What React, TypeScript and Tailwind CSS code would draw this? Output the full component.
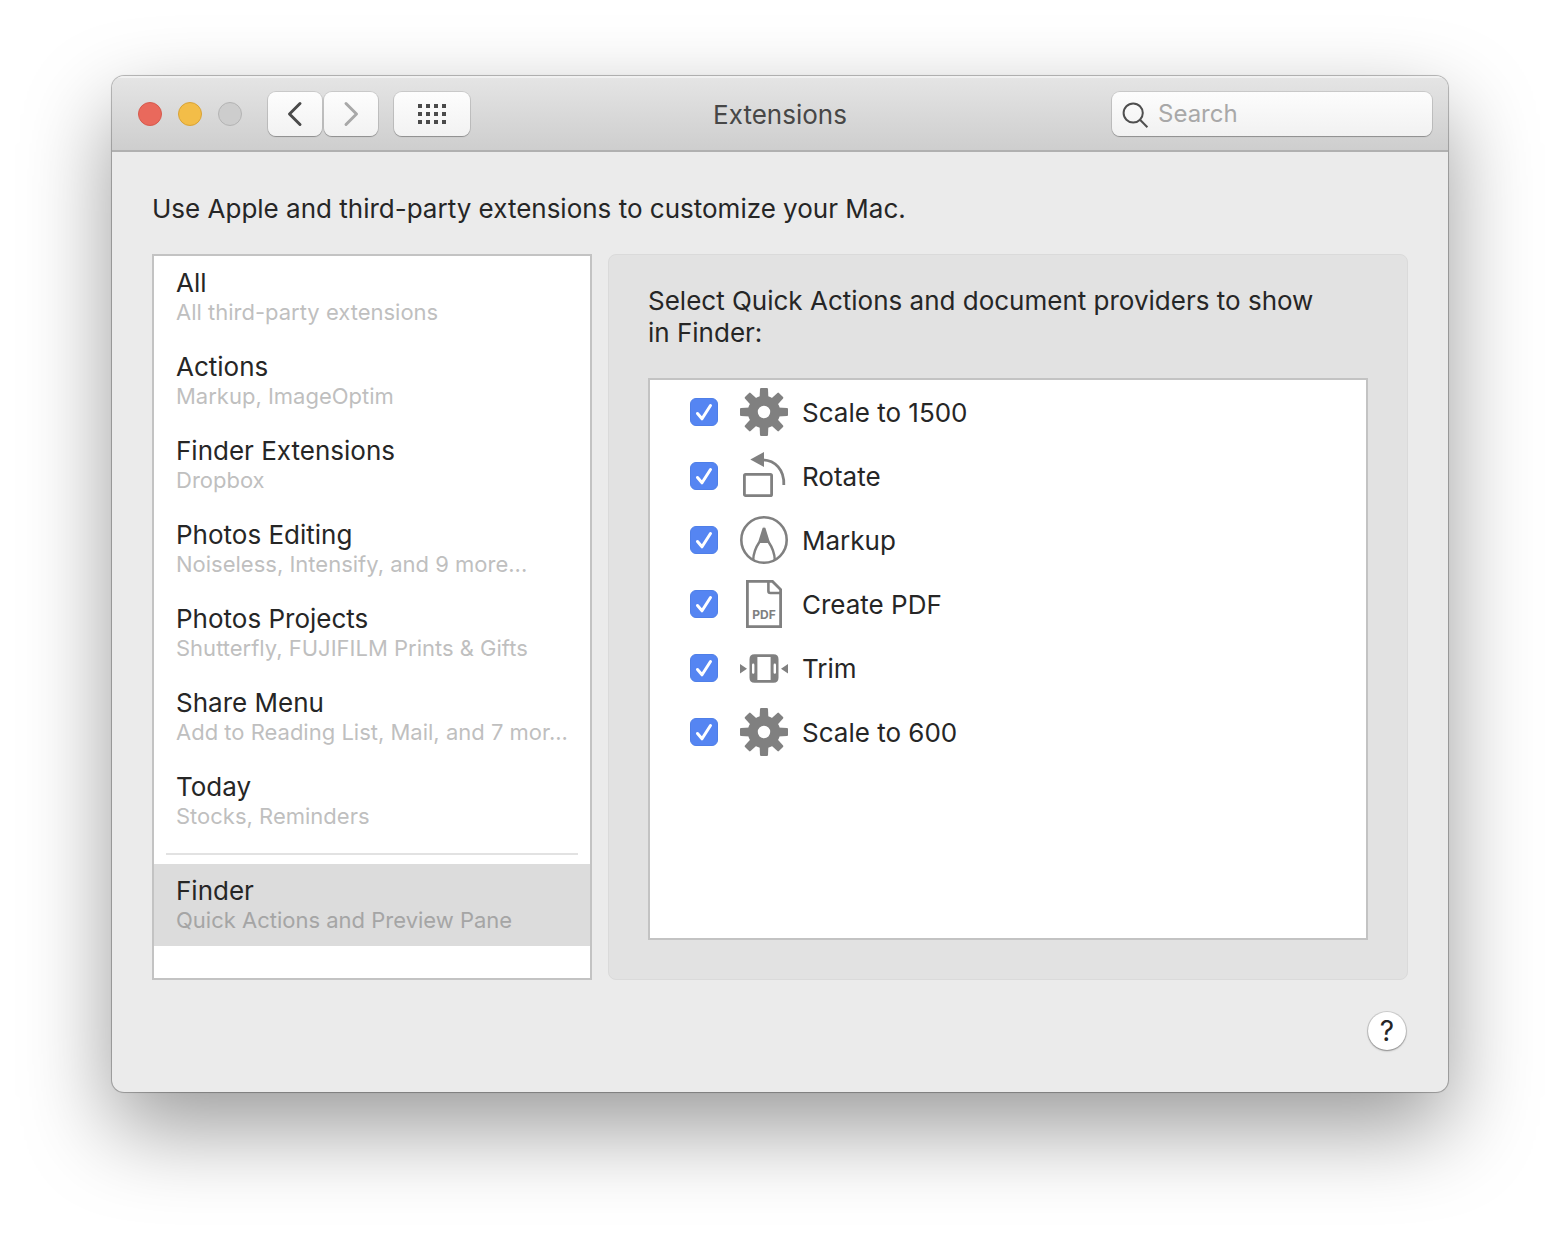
import { useState } from "react";
import type { ReactNode } from "react";
import clsx from "clsx";

const CATEGORIES = [
  { title: "All", detail: "All third-party extensions" },
  { title: "Actions", detail: "Markup, ImageOptim" },
  { title: "Finder Extensions", detail: "Dropbox" },
  { title: "Photos Editing", detail: "Noiseless, Intensify, and 9 more..." },
  { title: "Photos Projects", detail: "Shutterfly, FUJIFILM Prints & Gifts" },
  { title: "Share Menu", detail: "Add to Reading List, Mail, and 7 mor..." },
  { title: "Today", detail: "Stocks, Reminders" },
];

const FINDER = { title: "Finder", detail: "Quick Actions and Preview Pane" };

const TEETH = [0, 45, 90, 135, 180, 225, 270, 315];

function IconFrame({ children }: { children: ReactNode }) {
  return (
    <svg viewBox="0 0 48 48" className="size-12 shrink-0 text-[#808080]" fill="none" stroke="none" aria-hidden>
      {children}
    </svg>
  );
}

function GearIcon() {
  return (
    <IconFrame>
      <circle cx="24" cy="24" r="11.2" stroke="currentColor" strokeWidth="10" />
      {TEETH.map((angle) => (
        <path
          key={angle}
          d="M19.6 10 L20 1 Q20.1 0 21.1 0 H26.9 Q27.9 0 28 1 L28.4 10 Z"
          fill="currentColor"
          transform={`rotate(${angle} 24 24)`}
        />
      ))}
    </IconFrame>
  );
}

function RotateIcon() {
  return (
    <IconFrame>
      <rect x="4.4" y="22.4" width="27.2" height="21.2" rx="1.2" stroke="currentColor" strokeWidth="2.8" />
      <path d="M10.3 7.4 L24 0 V15 Z" fill="currentColor" />
      <path d="M23 7.8 C35 8.4 44.5 17.5 43.8 33" stroke="currentColor" strokeWidth="2.8" />
    </IconFrame>
  );
}

function MarkupIcon() {
  return (
    <IconFrame>
      <circle cx="24" cy="24" r="22.7" stroke="currentColor" strokeWidth="2.6" />
      <path d="M24 10.5 L18.6 27 H29.4 Z" fill="currentColor" />
      <path
        d="M23.8 12 L19.4 26 C16 31 13.4 37 13.2 44 M24.2 12 L28.6 26 C32 31 34.6 37 34.8 44"
        stroke="currentColor"
        strokeWidth="2.4"
      />
    </IconFrame>
  );
}

function PdfIcon() {
  return (
    <IconFrame>
      <path d="M7.4 1.4 H32.5 L40.6 9.5 V46.6 H7.4 Z" stroke="currentColor" strokeWidth="2.8" />
      <path d="M28.4 1.4 V11 Q28.4 13 30.4 13 H40.6" stroke="currentColor" strokeWidth="2.6" />
      <text
        x="24"
        y="39"
        textAnchor="middle"
        fill="currentColor"
        className="font-['Inter',sans-serif] text-[12px] font-bold"
      >
        PDF
      </text>
    </IconFrame>
  );
}

function TrimIcon() {
  return (
    <IconFrame>
      <path d="M0 20 L7 24.7 L0 29.4 Z M48 20 L41 24.7 L48 29.4 Z" fill="currentColor" />
      <path
        fillRule="evenodd"
        fill="currentColor"
        d="M14.5 10.3 H33.5 Q38.5 10.3 38.5 15.3 V33.7 Q38.5 38.7 33.5 38.7 H14.5 Q9.5 38.7 9.5 33.7 V15.3 Q9.5 10.3 14.5 10.3 Z M17.4 13 V36 H30.6 V13 Z M13.2 19.6 Q12 19.6 12 21 V28.4 Q12 29.8 13.2 29.8 Q14.4 29.8 14.4 28.4 V21 Q14.4 19.6 13.2 19.6 Z M34.8 19.6 Q33.6 19.6 33.6 21 V28.4 Q33.6 29.8 34.8 29.8 Q36 29.8 36 28.4 V21 Q36 19.6 34.8 19.6 Z"
      />
    </IconFrame>
  );
}

const QUICK_ACTIONS = [
  { id: "scale-1500", label: "Scale to 1500", icon: <GearIcon /> },
  { id: "rotate", label: "Rotate", icon: <RotateIcon /> },
  { id: "markup", label: "Markup", icon: <MarkupIcon /> },
  { id: "create-pdf", label: "Create PDF", icon: <PdfIcon /> },
  { id: "trim", label: "Trim", icon: <TrimIcon /> },
  { id: "scale-600", label: "Scale to 600", icon: <GearIcon /> },
];

const toolbarButton =
  "flex h-11 items-center justify-center rounded-lg bg-linear-to-b from-[#fdfdfd] to-[#f2f2f2] shadow-[0_0_0_1px_rgba(0,0,0,0.1),0_1px_1px_rgba(0,0,0,0.25)]";

function TitleBar() {
  return (
    <header className="grid h-[76px] grid-cols-[1fr_auto_1fr] items-center border-b-2 border-[#b0b0b0] bg-linear-to-b from-[#e5e5e5] to-[#cecece] px-4 pt-[2px] shadow-[inset_0_2px_0_rgba(255,255,255,0.45)]">
      <div className="flex items-center pl-[10px]">
        <div className="flex gap-4">
          <button type="button" aria-label="Close" className="size-6 rounded-full border border-[#d65a4d] bg-[#e9695c]" />
          <button type="button" aria-label="Minimize" className="size-6 rounded-full border border-[#d9a336] bg-[#f3bd48]" />
          <button type="button" aria-label="Zoom" className="size-6 rounded-full border border-[#b4b4b4] bg-[#cdcdcd]" />
        </div>
        <div className="ml-[26px] flex gap-[2px]">
          <button type="button" aria-label="Back" className={clsx(toolbarButton, "w-[54px]")}>
            <svg viewBox="0 0 16 26" className="h-[26px] w-4" fill="none" stroke="#4a4a4a" strokeWidth="3" strokeLinecap="round" strokeLinejoin="round" aria-hidden>
              <path d="M13 2.5 L2.5 13 L13 23.5" />
            </svg>
          </button>
          <button type="button" aria-label="Forward" className={clsx(toolbarButton, "w-[54px]")}>
            <svg viewBox="0 0 16 26" className="h-[26px] w-4" fill="none" stroke="#a8a8a8" strokeWidth="3" strokeLinecap="round" strokeLinejoin="round" aria-hidden>
              <path d="M3 2.5 L13.5 13 L3 23.5" />
            </svg>
          </button>
        </div>
        <button type="button" aria-label="Show All" className={clsx(toolbarButton, "ml-4 w-[76px]")}>
          <svg viewBox="0 0 28 20" className="h-5 w-7" fill="#4a4a4a" aria-hidden>
            {[0, 8, 16].map((y) =>
              [0, 8, 16, 24].map((x) => <rect key={`${x}-${y}`} x={x} y={y} width="4" height="4" />),
            )}
          </svg>
        </button>
      </div>
      <h1 className="pt-[2px] text-[26px] leading-8 text-[#474747]">Extensions</h1>
      <label className="flex h-11 w-80 items-center gap-2 justify-self-end rounded-lg bg-linear-to-b from-[#fdfdfd] to-[#f1f1f1] pl-[10px] shadow-[0_0_0_1px_rgba(0,0,0,0.1),0_1px_1px_rgba(0,0,0,0.25)]">
        <svg viewBox="0 0 28 28" className="size-7 shrink-0" fill="none" stroke="#4f4f4f" strokeWidth="2" aria-hidden>
          <circle cx="11.2" cy="13" r="9.6" />
          <path d="M18 19.8 L25.4 27.2" />
        </svg>
        <input
          type="search"
          aria-label="Search"
          placeholder="Search"
          className="min-w-0 flex-1 bg-transparent text-[24px] outline-none placeholder:text-[#a8a8a8]"
        />
      </label>
    </header>
  );
}

type CategoryProps = {
  title: string;
  detail: string;
  selected: boolean;
  onSelect: () => void;
};

function Category({ title, detail, selected, onSelect }: CategoryProps) {
  return (
    <li className={clsx("flex", !selected && "pb-[2px]")}>
      <button
        type="button"
        aria-pressed={selected}
        onClick={onSelect}
        className={clsx("w-full min-w-0 pt-[11px] pr-4 pb-[13px] pl-[22px] text-left", selected && "bg-[#dcdcdc]")}
      >
        <span className="block text-[26px] leading-8">{title}</span>
        <span
          className={clsx(
            "block text-[22px] leading-[26px] whitespace-nowrap",
            selected ? "text-[#a5a5a5]" : "text-[#bfbfbf]",
          )}
        >
          {detail}
        </span>
      </button>
    </li>
  );
}

function ActionRow({ id, label, icon }: { id: string; label: string; icon: ReactNode }) {
  return (
    <li className="flex h-16 items-center pl-10">
      <span className="relative flex size-7">
        <input
          id={id}
          type="checkbox"
          defaultChecked
          className="peer size-7 appearance-none rounded-md border border-[#c4c4c4] bg-white checked:border-[#4f7fe8] checked:bg-[#5585f2]"
        />
        <svg
          viewBox="0 0 28 28"
          className="pointer-events-none invisible absolute inset-0 peer-checked:visible"
          fill="none"
          stroke="white"
          strokeWidth="3"
          strokeLinecap="round"
          strokeLinejoin="round"
          aria-hidden
        >
          <path d="M7.5 15.5 L12 20.8 L20.5 7.5" />
        </svg>
      </span>
      <label htmlFor={id} className="ml-[22px] flex items-center gap-[14px] text-[26px] leading-8">
        {icon}
        <span className="pt-[2px]">{label}</span>
      </label>
    </li>
  );
}

export default function App() {
  const [selected, setSelected] = useState(FINDER.title);

  return (
    <main className="min-h-screen bg-white px-28 pt-[76px] pb-[148px] font-['Inter',sans-serif] text-[#262626]">
      <div className="overflow-hidden rounded-xl bg-[#ebebeb] shadow-[0_0_0_1px_rgba(0,0,0,0.2),0_0_2px_rgba(0,0,0,0.25),0_36px_88px_rgba(0,0,0,0.4)]">
        <TitleBar />
        <div className="px-10 pt-[41px] pb-[42px]">
          <p className="text-[26px] leading-8">Use Apple and third-party extensions to customize your Mac.</p>

          <div className="mt-[29px] flex gap-4">
            <nav aria-label="Extension categories" className="w-[440px] shrink-0 border-2 border-[#c3c3c3] bg-white pb-8">
              <ul>
                {CATEGORIES.map((category) => (
                  <Category
                    key={category.title}
                    {...category}
                    selected={selected === category.title}
                    onSelect={() => setSelected(category.title)}
                  />
                ))}
              </ul>
              <hr className="mx-3 my-[9px] border-t-2 border-[#e2e2e2]" />
              <ul>
                <Category
                  {...FINDER}
                  selected={selected === FINDER.title}
                  onSelect={() => setSelected(FINDER.title)}
                />
              </ul>
            </nav>

            <section className="flex min-w-0 flex-1 flex-col rounded-lg border border-[#dadada] bg-[#e2e2e2] px-[39px] pt-[30px] pb-[39px]">
              <h2 className="pr-12 text-[26px] leading-8">
                Select Quick Actions and document providers to show in Finder:
              </h2>
              <ul className="mt-[29px] flex-1 border-2 border-[#c3c3c3] bg-white">
                {QUICK_ACTIONS.map((action) => (
                  <ActionRow key={action.id} {...action} />
                ))}
              </ul>
            </section>
          </div>

          <div className="mt-8 flex justify-end pr-[2px]">
            <button
              type="button"
              aria-label="Help"
              className="flex size-[38px] items-center justify-center rounded-full bg-white text-[28px] leading-8 shadow-[0_0_0_1px_rgba(0,0,0,0.12),0_1px_2px_rgba(0,0,0,0.35)]"
            >
              ?
            </button>
          </div>
        </div>
      </div>
    </main>
  );
}
